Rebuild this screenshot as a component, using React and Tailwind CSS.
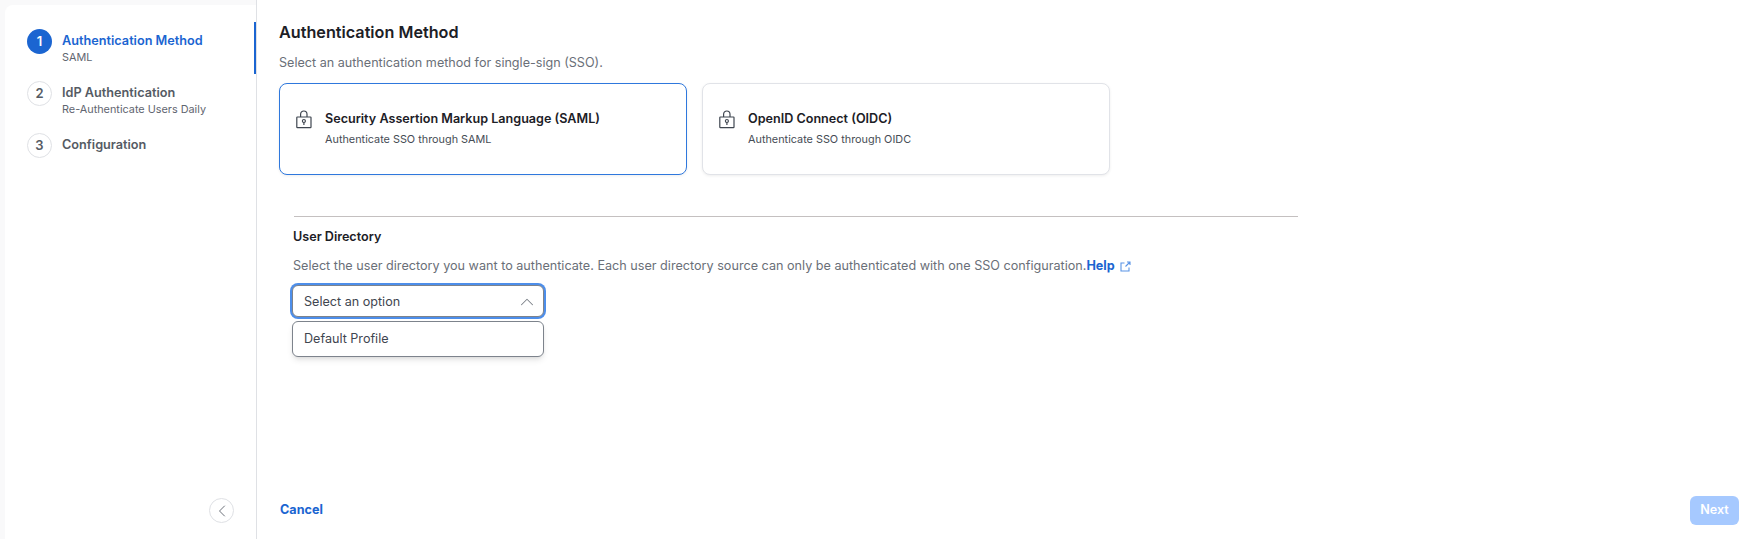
import React from "react";
import { ChevronLeft, ChevronUp } from "lucide-react";

const steps = [
  { num: 1, title: "Authentication Method", sub: "SAML", active: true },
  { num: 2, title: "IdP Authentication", sub: "Re-Authenticate Users Daily" },
  { num: 3, title: "Configuration" },
];

const LockIcon = () => (
  <svg width="16" height="20" viewBox="0 0 16 20" fill="none" stroke="#3f4650" strokeWidth="1.2" className="mt-[1px] shrink-0">
    <rect x="0.8" y="8" width="14.2" height="10.6" rx="0.6" />
    <path d="M4.6 8V5.2a3.2 3.2 0 0 1 6.4 0V8" />
    <circle cx="7.9" cy="12" r="1.5" />
    <path d="M7.9 13.5v2.4" />
  </svg>
);

const HelpLinkIcon = () => (
  <svg width="11" height="11" viewBox="0 0 11 11" fill="none" stroke="#5a94e6" strokeWidth="1.1" className="ml-[5px] shrink-0">
    <path d="M4.5 2H1v8h8V6.5" />
    <path d="M5.5 5.5L10 1M7 1h3v3" />
  </svg>
);

const MethodCard = ({ title, sub, selected }) => (
  <div
    className={`flex h-[92px] w-[408px] items-center rounded-lg border bg-white pb-[3px] pl-4 shadow-[0_1px_3px_rgba(0,0,0,0.07)] ${
      selected ? "border-[#2f78dd]" : "border-[#e1e3e8]"
    }`}
  >
    <div className="flex items-start gap-[13px]">
      <LockIcon />
      <div>
        <div className="pt-[1px] text-[12.6px] leading-5 font-semibold text-[#1c2026]">{title}</div>
        <div className="mt-[2px] text-[10.85px] leading-4 text-[#464c55]">{sub}</div>
      </div>
    </div>
  </div>
);

const Step = ({ num, title, sub, active }) => (
  <div className="relative flex h-[52px] pt-[7px] pl-[22px]">
    <div
      className={`flex h-[25px] w-[25px] shrink-0 items-center justify-center rounded-full text-[13px] font-semibold ${
        active ? "bg-[#1b65d1] text-white" : "border border-[#dfe1e5] bg-white text-[#555b64]"
      }`}
    >
      {num}
    </div>
    <div className="ml-[10px] pt-[3px]">
      <div className={`text-[12.7px] leading-[18px] font-semibold ${active ? "text-[#1b65d1]" : "text-[#555b64]"}`}>
        {title}
      </div>
      {sub && <div className="text-[10.85px] leading-[15px] text-[#5f6570]">{sub}</div>}
    </div>
    {active && <div className="absolute top-0 right-0 h-[52px] w-[2px] bg-[#1b65d1]" />}
  </div>
);

export default function App() {
  return (
    <div className="flex h-[539px] w-[1751px] bg-white font-['Inter',sans-serif]">
      {/* Sidebar */}
      <div className="w-[257px] shrink-0 border-r border-[#dfe1e5] bg-[#f9f9fa] pt-[5px] pl-[5px]">
        <aside className="flex h-full flex-col justify-between rounded-tl-lg bg-white pt-[17px] pb-[16px]">
          <div>
            {steps.map((s) => (
              <Step key={s.num} {...s} />
            ))}
          </div>
          <div className="flex justify-end pr-[22px]">
            <button className="flex h-[25px] w-[25px] items-center justify-center rounded-full border border-[#dfe1e5] bg-white">
              <ChevronLeft size={20} strokeWidth={1.2} color="#6b7079" />
            </button>
          </div>
        </aside>
      </div>

      {/* Main */}
      <main className="flex flex-1 flex-col justify-between bg-white pb-[14px]">
        <div className="pt-[22px] pl-[22px]">
          <h1 className="text-[16.2px] leading-5 font-semibold text-[#1c2026]">Authentication Method</h1>
          <p className="mt-[11px] text-[12.6px] leading-5 text-[#6a6f78]">
            Select an authentication method for single-sign (SSO).
          </p>
          <div className="mt-[10px] flex gap-[15px]">
            <MethodCard title="Security Assertion Markup Language (SAML)" sub="Authenticate SSO through SAML" selected />
            <MethodCard title="OpenID Connect (OIDC)" sub="Authenticate SSO through OIDC" />
          </div>

          <div className="mt-[41px] ml-[15px] h-px w-[1004px] bg-[#c4c0c0]" />
          <div className="ml-[14px] pt-[10px]">
            <h2 className="text-[12.6px] leading-5 font-semibold text-[#1c2026]">User Directory</h2>
            <p className="mt-[9px] flex items-center text-[12.64px] leading-5 text-[#6a6f78]">
              Select the user directory you want to authenticate. Each user directory source can only be authenticated
              with one SSO configuration.
              <a className="font-bold text-[#1b65d1]">Help</a>
              <HelpLinkIcon />
            </p>
            <div className="mt-[9px] -ml-[1px] w-[252px]">
              <div className="flex h-[32px] items-center justify-between rounded-md border border-[#7d838c] bg-white pt-[2px] pr-[5px] pl-[11px] text-[12.6px] text-[#3f4650] ring-2 ring-[#4d8eea]">
                Select an option
                <ChevronUp size={22} strokeWidth={1.1} color="#7b8088" />
              </div>
              <div className="mt-[4px] flex h-[36px] items-center rounded-md border border-[#7d838c] bg-white pl-[11px] text-[12.6px] text-[#3f4650] shadow-md">
                Default Profile
              </div>
            </div>
          </div>
        </div>

        <div className="flex items-center justify-between pr-[12px] pl-[23px]">
          <button className="text-[12.6px] font-bold text-[#1b65d1]">Cancel</button>
          <button className="flex h-[29px] w-[49px] items-center justify-center rounded-md bg-[#a6c9ff] text-[12.6px] font-semibold text-white">
            Next
          </button>
        </div>
      </main>
    </div>
  );
}
